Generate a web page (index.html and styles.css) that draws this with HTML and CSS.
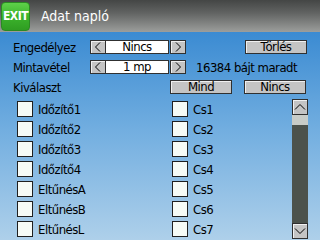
FILE: index.html
```html
<!DOCTYPE html>
<html lang="hu">
<head>
<meta charset="UTF-8">
<title>Adat napló</title>
<link rel="stylesheet" href="styles.css">
</head>
<body>

<div class="top">
  <div class="exit">EXIT</div>
  <div class="title">Adat napló</div>
</div>

<div class="panel">
  <div class="row">
    <div class="label">Engedélyez</div>
    <div class="spin">
      <span class="arrow"><svg width="10" height="10" viewBox="0 0 10 10"><polyline points="7,0.5 2.5,5 7,9.5" fill="none" stroke="#000" stroke-width="1"/></svg></span>
      <span class="value">Nincs</span>
      <span class="arrow right"><svg width="10" height="10" viewBox="0 0 10 10"><polyline points="3,0.5 7.5,5 3,9.5" fill="none" stroke="#000" stroke-width="1"/></svg></span>
    </div>
    <div class="btn btn-clear">Törlés</div>
  </div>
  <div class="row">
    <div class="label">Mintavétel</div>
    <div class="spin">
      <span class="arrow"><svg width="10" height="10" viewBox="0 0 10 10"><polyline points="7,0.5 2.5,5 7,9.5" fill="none" stroke="#000" stroke-width="1"/></svg></span>
      <span class="value">1 mp</span>
      <span class="arrow right"><svg width="10" height="10" viewBox="0 0 10 10"><polyline points="3,0.5 7.5,5 3,9.5" fill="none" stroke="#000" stroke-width="1"/></svg></span>
    </div>
    <div class="free">16384 bájt maradt</div>
  </div>
  <div class="row">
    <div class="label">Kiválaszt</div>
    <div class="btn btn-all">Mind</div>
    <div class="btn btn-none">Nincs</div>
  </div>

  <div class="list">
    <div class="cols">
      <div class="item"><span class="box"></span>Időzítő1</div>
      <div class="item"><span class="box"></span>Cs1</div>
      <div class="item"><span class="box"></span>Időzítő2</div>
      <div class="item"><span class="box"></span>Cs2</div>
      <div class="item"><span class="box"></span>Időzítő3</div>
      <div class="item"><span class="box"></span>Cs3</div>
      <div class="item"><span class="box"></span>Időzítő4</div>
      <div class="item"><span class="box"></span>Cs4</div>
      <div class="item"><span class="box"></span>EltűnésA</div>
      <div class="item"><span class="box"></span>Cs5</div>
      <div class="item"><span class="box"></span>EltűnésB</div>
      <div class="item"><span class="box"></span>Cs6</div>
      <div class="item"><span class="box"></span>EltűnésL</div>
      <div class="item"><span class="box"></span>Cs7</div>
    </div>
    <div class="scroll">
      <div class="sbtn"><svg width="12" height="8" viewBox="0 0 12 8"><polyline points="1,6.5 6,1.5 11,6.5" fill="none" stroke="#000" stroke-width="1"/></svg></div>
      <div class="thumb"></div>
      <div class="track"></div>
      <div class="sbtn"><svg width="12" height="8" viewBox="0 0 12 8"><polyline points="1,1.5 6,6.5 11,1.5" fill="none" stroke="#000" stroke-width="1"/></svg></div>
    </div>
  </div>
</div>

</body>
</html>
```

FILE: styles.css
```css
body {
  margin: 0;
  width: 320px;
  height: 240px;
  overflow: hidden;
  font-family: "DejaVu Sans Condensed", "Liberation Sans", sans-serif;
  font-size: 13px;
  letter-spacing: -0.5px;
  color: #000;
  background: linear-gradient(#3b8bd2 32px, #72aee0 130px, #aed0ea 240px);
}

.top {
  height: 32px;
  display: flex;
  align-items: center;
  background: linear-gradient(#444645, #616362 40%, #9c9e9c);
}
.exit {
  width: 29px;
  height: 29px;
  margin-left: 1px;
  box-sizing: border-box;
  border: 1px solid #2a8a22;
  border-radius: 4px;
  background: linear-gradient(#5ed04a, #3cb42c 50%, #2f9d22);
  color: #fff;
  font-weight: bold;
  font-size: 12px;
  line-height: 27px;
  text-align: center;
}
.title {
  margin-left: 11px;
  color: #fff;
  font-size: 14px;
  letter-spacing: 0;
}

.panel { padding-top: 5px; }

.row {
  height: 20px;
  display: flex;
  align-items: center;
}
.label {
  width: 77px;
  padding-left: 13px;
}

.spin { display: flex; align-items: center; }
.arrow {
  width: 16px;
  height: 14px;
  box-sizing: border-box;
  border: 1px solid #303030;
  background: #c4c4c4;
  box-shadow: inset 1px 1px 0 #f0f0f0;
  display: flex;
  align-items: center;
  justify-content: center;
}
.arrow.right { margin-left: 1px; }
.value {
  width: 63px;
  height: 14px;
  box-sizing: border-box;
  border: 1px solid #303030;
  border-left: none;
  background: #fff;
  text-align: center;
  line-height: 12px;
}

.btn {
  width: 62px;
  height: 14px;
  box-sizing: border-box;
  border: 1px solid #303030;
  background: #c4c4c4;
  box-shadow: inset 1px 1px 0 #f0f0f0;
  text-align: center;
  line-height: 12px;
}
.btn-clear { margin-left: 59px; }
.btn-all { margin-left: 80px; }
.btn-none { margin-left: 12px; }

.free { margin-left: 10px; }

.list {
  display: flex;
  margin-top: 2px;
}
.cols {
  width: 275px;
  padding-left: 17px;
  display: grid;
  grid-template-columns: 155px 120px;
  grid-auto-rows: 20px;
}
.item {
  display: flex;
  align-items: center;
  gap: 5px;
}
.box {
  width: 16px;
  height: 16px;
  box-sizing: border-box;
  border: 1px solid #202020;
  background: #f6fbf6;
}

.scroll {
  width: 16px;
  height: 140px;
  display: flex;
  flex-direction: column;
}
.sbtn {
  height: 16px;
  box-sizing: border-box;
  border: 1px solid #303030;
  background: #c4c4c4;
  box-shadow: inset 1px 1px 0 #f0f0f0;
  display: flex;
  align-items: center;
  justify-content: center;
}
.thumb { height: 10px; background: #c8ccc8; }
.track { flex: 1; background: #4c524c; }
```
